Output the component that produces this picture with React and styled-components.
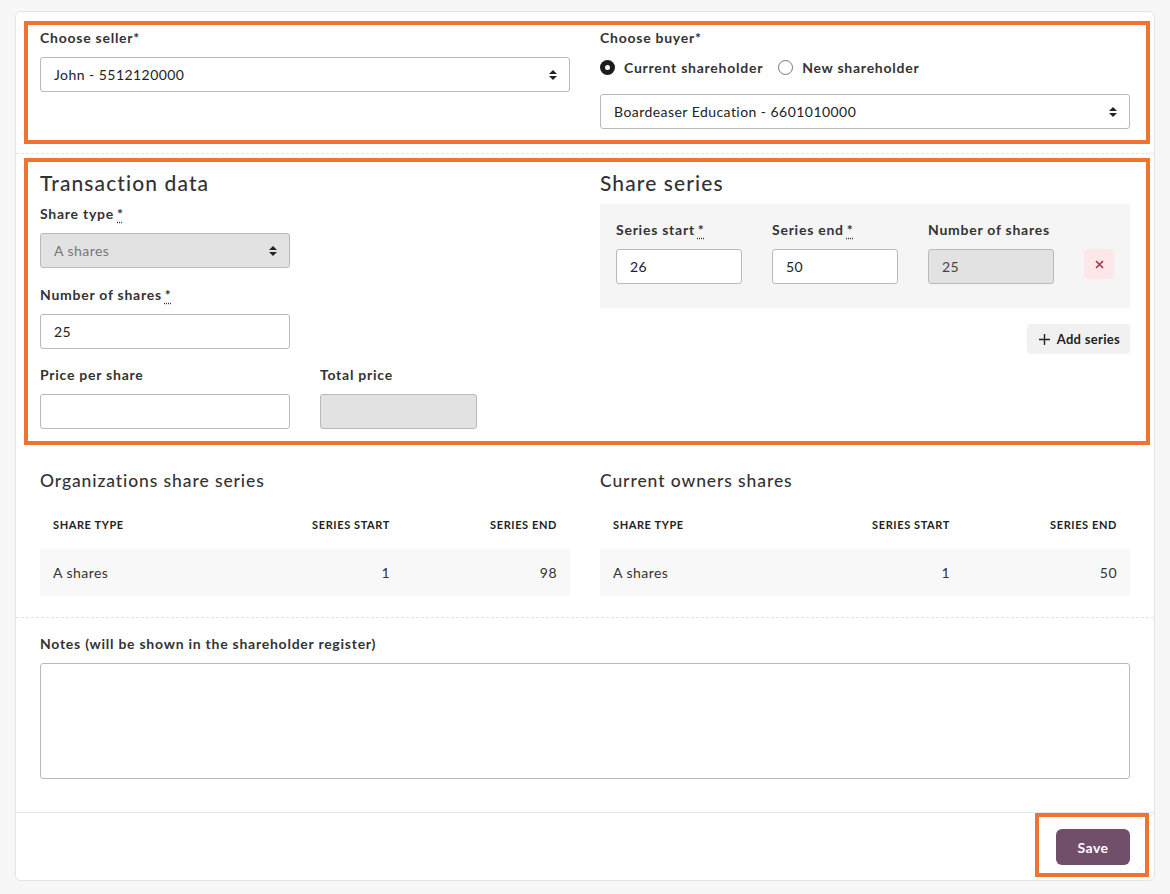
import React from 'react';
import styled, { createGlobalStyle } from 'styled-components';

const GlobalStyle = createGlobalStyle`
  body {
    margin: 0;
    background: #f7f7f7;
    font-family: Lato, "Open Sans", "Liberation Sans", sans-serif;
    color: #333;
  }
  * { box-sizing: border-box; }
`;

const Card = styled.div`
  margin: 11px 0 0 15px;
  width: 1140px;
  background: #fff;
  border: 1px solid #e4e4e4;
  border-radius: 6px;
`;

const Section = styled.div`
  padding: ${p => p.pad};
  border-bottom: ${p => (p.dashed ? '1px dashed #e3e3e3' : 'none')};
`;

const Highlight = styled.div`
  border: 4px solid #ee7531;
  padding: ${p => p.pad};
`;

const TwoCol = styled.div`
  display: grid;
  grid-template-columns: 530px 530px;
  column-gap: 30px;
  align-items: start;
`;

const Label = styled.label`
  display: block;
  font-size: 14px;
  font-weight: 700;
  line-height: 20px;
  letter-spacing: 0.75px;
  color: #333;
  margin-bottom: 9px;
  white-space: nowrap;
`;

const Req = styled.abbr`
  text-decoration: underline dotted;
  text-underline-offset: 3px;
  margin-left: 3px;
`;

const Heading = styled.h2`
  margin: 0 0 9px;
  font-size: 21px;
  font-weight: 500;
  line-height: 25px;
  letter-spacing: 1.1px;
  color: #333;
`;

const SubHeading = styled.h3`
  margin: 0 0 9px;
  font-size: 17.5px;
  font-weight: 500;
  line-height: 20px;
  letter-spacing: 0.9px;
  color: #333;
`;

const Field = styled.div`
  width: ${p => p.w || '100%'};
  margin-bottom: ${p => p.mb || '0'};
`;

const SelectWrap = styled.div`
  position: relative;
  width: 100%;
`;

const NativeSelect = styled.select`
  appearance: none;
  width: 100%;
  height: 35px;
  padding: 0 36px 0 13px;
  font-family: inherit;
  font-size: 14px;
  letter-spacing: 0.45px;
  color: ${p => (p.disabled ? '#777' : '#222')};
  background: ${p => (p.disabled ? '#e2e2e2' : '#fff')};
  border: 1px solid #b9b9b9;
  border-radius: 3px;
  opacity: 1;
`;

const Arrows = styled.svg`
  position: absolute;
  right: 13px;
  top: 13px;
  pointer-events: none;
`;

const Input = styled.input`
  width: 100%;
  height: 35px;
  padding: 0 13px;
  font-family: inherit;
  font-size: 14px;
  letter-spacing: 0.45px;
  color: #222;
  background: ${p => (p.disabled ? '#e2e2e2' : '#fff')};
  border: 1px solid #b9b9b9;
  border-radius: 3px;
  &:disabled { color: #444; }
`;

const RadioRow = styled.div`
  display: flex;
  align-items: center;
  height: 20px;
  gap: 15px;
  margin-bottom: 17px;
`;

const RadioOption = styled.span`
  display: inline-flex;
  align-items: center;
  gap: 9px;
  font-size: 14px;
  font-weight: 700;
  letter-spacing: 0.75px;
  color: #333;
`;

const RadioDot = styled.span`
  width: 15px;
  height: 15px;
  border-radius: 50%;
  background: ${p => (p.checked ? '#1c1c1c' : '#fff')};
  border: ${p => (p.checked ? 'none' : '1px solid #777')};
  display: inline-flex;
  align-items: center;
  justify-content: center;
  &::after {
    content: '';
    display: ${p => (p.checked ? 'block' : 'none')};
    width: 5px;
    height: 5px;
    border-radius: 50%;
    background: #fff;
  }
`;

const PriceRow = styled.div`
  display: grid;
  grid-template-columns: 250px 157px;
  column-gap: 30px;
`;

const SeriesPanel = styled.div`
  background: #f5f5f5;
  padding: 16px 16px 24px;
  display: grid;
  grid-template-columns: 126px 126px 126px 30px;
  column-gap: 30px;
  align-items: end;
`;

const RemoveButton = styled.button`
  width: 30px;
  height: 30px;
  margin-bottom: 5px;
  border: none;
  border-radius: 4px;
  background: #fde7e9;
  display: flex;
  align-items: center;
  justify-content: center;
  padding: 0;
`;

const Actions = styled.div`
  display: flex;
  justify-content: flex-end;
  margin-top: 16px;
`;

const AddButton = styled.button`
  display: inline-flex;
  align-items: center;
  gap: 7px;
  height: 30px;
  padding: 0 10px 0 12px;
  border: none;
  border-radius: 4px;
  background: #f1f1f1;
  font-family: inherit;
  font-size: 13px;
  font-weight: 700;
  letter-spacing: 0.3px;
  color: #222;
`;

const Table = styled.div`
  width: 100%;
`;

const Row = styled.div`
  display: grid;
  grid-template-columns: 1fr 167px 167px;
  align-items: center;
  height: ${p => (p.head ? '49px' : '47px')};
  background: ${p => (p.head ? 'transparent' : '#f8f8f8')};
`;

const Cell = styled.div`
  padding: 0 13px;
  text-align: ${p => (p.right ? 'right' : 'left')};
  font-size: ${p => (p.head ? '11px' : '14px')};
  font-weight: ${p => (p.head ? 700 : 400)};
  text-transform: ${p => (p.head ? 'uppercase' : 'none')};
  letter-spacing: ${p => (p.head ? '0.6px' : '0.45px')};
  color: ${p => (p.head ? '#222' : '#333')};
`;

const TextArea = styled.textarea`
  display: block;
  width: 100%;
  height: 116px;
  border: 1px solid #b9b9b9;
  border-radius: 3px;
  resize: none;
  font-family: inherit;
`;

const Footer = styled.div`
  border-top: 1px solid #e5e5e5;
  display: flex;
  justify-content: flex-end;
  padding: 0 5px 3px 0;
`;

const SaveButton = styled.button`
  width: 74px;
  height: 36px;
  border: none;
  border-radius: 6px;
  background: #714f6b;
  color: #fff;
  font-family: inherit;
  font-size: 14px;
  font-weight: 700;
  letter-spacing: 0.5px;
`;

function Select({ value, disabled }) {
  return (
    <SelectWrap>
      <NativeSelect value={value} disabled={disabled} onChange={() => {}}>
        <option value={value}>{value}</option>
      </NativeSelect>
      <Arrows width="8" height="10" viewBox="0 0 8 10">
        <path d="M4 0 L8 4 H0 Z M0 6 H8 L4 10 Z" fill="#222" />
      </Arrows>
    </SelectWrap>
  );
}

function SharesTable({ title, rows }) {
  return (
    <div>
      <SubHeading>{title}</SubHeading>
      <Table>
        <Row head>
          <Cell head>Share type</Cell>
          <Cell head right>Series start</Cell>
          <Cell head right>Series end</Cell>
        </Row>
        {rows.map((r, i) => (
          <Row key={i}>
            <Cell>{r.type}</Cell>
            <Cell right>{r.start}</Cell>
            <Cell right>{r.end}</Cell>
          </Row>
        ))}
      </Table>
    </div>
  );
}

export default function App() {
  return (
    <>
      <GlobalStyle />
      <Card>
        <Section pad="9px 4px 9px 8px" dashed>
          <Highlight pad="3px 16px 11px 12px">
            <TwoCol>
              <div>
                <Label>Choose seller*</Label>
                <Select value="John - 5512120000" />
              </div>
              <div>
                <Label>Choose buyer*</Label>
                <RadioRow>
                  <RadioOption><RadioDot checked />Current shareholder</RadioOption>
                  <RadioOption><RadioDot />New shareholder</RadioOption>
                </RadioRow>
                <Select value="Boardeaser Education - 6601010000" />
              </div>
            </TwoCol>
          </Highlight>
        </Section>

        <Section pad="4px 4px 0 8px">
          <Highlight pad="8px 16px 12px 12px">
            <TwoCol>
              <div>
                <Heading>Transaction data</Heading>
                <Field w="250px" mb="17px">
                  <Label>Share type<Req title="required">*</Req></Label>
                  <Select value="A shares" disabled />
                </Field>
                <Field w="250px" mb="16px">
                  <Label>Number of shares<Req title="required">*</Req></Label>
                  <Input defaultValue="25" />
                </Field>
                <PriceRow>
                  <Field>
                    <Label>Price per share</Label>
                    <Input defaultValue="" />
                  </Field>
                  <Field>
                    <Label>Total price</Label>
                    <Input disabled defaultValue="" />
                  </Field>
                </PriceRow>
              </div>
              <div>
                <Heading>Share series</Heading>
                <SeriesPanel>
                  <Field>
                    <Label>Series start<Req title="required">*</Req></Label>
                    <Input defaultValue="26" />
                  </Field>
                  <Field>
                    <Label>Series end<Req title="required">*</Req></Label>
                    <Input defaultValue="50" />
                  </Field>
                  <Field>
                    <Label>Number of shares</Label>
                    <Input disabled defaultValue="25" />
                  </Field>
                  <RemoveButton aria-label="Remove series">
                    <svg width="9" height="9" viewBox="0 0 9 9">
                      <path d="M1 1 L8 8 M8 1 L1 8" stroke="#a8364a" strokeWidth="1.7" />
                    </svg>
                  </RemoveButton>
                </SeriesPanel>
                <Actions>
                  <AddButton>
                    <svg width="11" height="11" viewBox="0 0 11 11">
                      <path d="M5.5 0 V11 M0 5.5 H11" stroke="#222" strokeWidth="1.4" />
                    </svg>
                    Add series
                  </AddButton>
                </Actions>
              </div>
            </TwoCol>
          </Highlight>
        </Section>

        <Section pad="26px 24px 21px" dashed>
          <TwoCol>
            <SharesTable
              title="Organizations share series"
              rows={[{ type: 'A shares', start: 1, end: 98 }]}
            />
            <SharesTable
              title="Current owners shares"
              rows={[{ type: 'A shares', start: 1, end: 50 }]}
            />
          </TwoCol>
        </Section>

        <Section pad="16px 24px 33px">
          <Label>Notes (will be shown in the shareholder register)</Label>
          <TextArea />
        </Section>

        <Footer>
          <Highlight pad="12px 15px 8px 17px">
            <SaveButton>Save</SaveButton>
          </Highlight>
        </Footer>
      </Card>
    </>
  );
}
